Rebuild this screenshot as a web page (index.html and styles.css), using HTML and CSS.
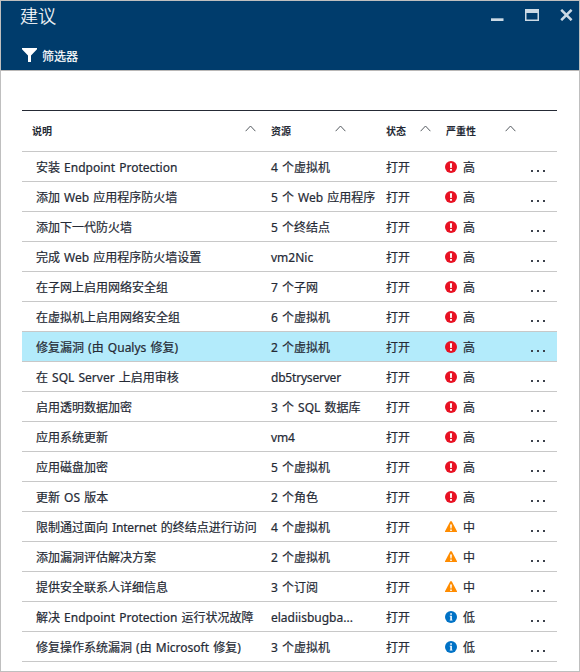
FILE: index.html
```
<!DOCTYPE html>
<html lang="zh-CN">
<head>
<meta charset="utf-8">
<title>建议</title>
<link rel="stylesheet" href="styles.css">
</head>
<body>
<svg class="defs" aria-hidden="true">
  <symbol id="high" viewBox="0 0 12 12"><circle cx="6" cy="6" r="6" fill="#e81123"/><path d="M4.9 2.2h2.2L6.8 7H5.2zM5 8h2v1.8H5z" fill="#fff"/></symbol>
  <symbol id="medium" viewBox="0 0 12 12"><path d="M5.3.2h1.4L12 10.2v.9H0v-.9z" fill="#ff8c00"/><path d="M5.1 3.6h1.8l-.3 4H5.4zM5.2 8.4h1.6V10H5.2z" fill="#fff"/></symbol>
  <symbol id="low" viewBox="0 0 12 12"><circle cx="6" cy="6" r="6" fill="#0072c6"/><path d="M5.2 2.2h1.7v1.6H5.2zM4.7 4.8h2.2v4h.6v.8H4.7v-.8h.6V5.6h-.6z" fill="#fff"/></symbol>
  <symbol id="sort" viewBox="0 0 11 7"><path d="M.6 6.2 5.5 1l4.9 5.2" fill="none" stroke="#555a60" stroke-width="1"/></symbol>
</svg>
<div class="blade">
  <header class="top">
    <div class="titlebar">
      <h1>建议</h1>
      <div class="controls">
        <svg width="13" height="12" viewBox="0 0 13 12"><path d="M0 9.3h12.5V12H0z"/></svg>
        <svg width="14" height="12" viewBox="0 0 14 12"><path fill-rule="evenodd" d="M0 0h14v12H0zM1.5 4h11v6.6h-11z"/></svg>
        <svg width="13" height="12" viewBox="0 0 13 12"><path d="m1.2.8 10.4 10.4m0-10.4L1.2 11.2" fill="none" stroke="#ccdae5" stroke-width="2.5"/></svg>
      </div>
    </div>
    <div class="filter">
      <svg width="15" height="14" viewBox="0 0 15 14"><path d="M0 0h15v1.3L9 7.4V14H6V7.4L0 1.3z" fill="#fff"/></svg>
      <span>筛选器</span>
    </div>
  </header>
  <main class="grid">
    <div class="row head">
      <span class="cell">说明<svg class="sort"><use href="#sort"/></svg></span>
      <span class="cell">资源<svg class="sort"><use href="#sort"/></svg></span>
      <span class="cell">状态<svg class="sort"><use href="#sort"/></svg></span>
      <span class="cell">严重性<svg class="sort"><use href="#sort"/></svg></span>
    </div>
    <div class="row"><span>安装 Endpoint Protection</span><span>4 个虚拟机</span><span>打开</span><span class="sev"><svg><use href="#high"/></svg>高</span><span class="more"><i></i><i></i><i></i></span></div>
    <div class="row"><span>添加 Web 应用程序防火墙</span><span>5 个 Web 应用程序</span><span>打开</span><span class="sev"><svg><use href="#high"/></svg>高</span><span class="more"><i></i><i></i><i></i></span></div>
    <div class="row"><span>添加下一代防火墙</span><span>5 个终结点</span><span>打开</span><span class="sev"><svg><use href="#high"/></svg>高</span><span class="more"><i></i><i></i><i></i></span></div>
    <div class="row"><span>完成 Web 应用程序防火墙设置</span><span>vm2Nic</span><span>打开</span><span class="sev"><svg><use href="#high"/></svg>高</span><span class="more"><i></i><i></i><i></i></span></div>
    <div class="row"><span>在子网上启用网络安全组</span><span>7 个子网</span><span>打开</span><span class="sev"><svg><use href="#high"/></svg>高</span><span class="more"><i></i><i></i><i></i></span></div>
    <div class="row"><span>在虚拟机上启用网络安全组</span><span>6 个虚拟机</span><span>打开</span><span class="sev"><svg><use href="#high"/></svg>高</span><span class="more"><i></i><i></i><i></i></span></div>
    <div class="row selected"><span>修复漏洞 (由 Qualys 修复)</span><span>2 个虚拟机</span><span>打开</span><span class="sev"><svg><use href="#high"/></svg>高</span><span class="more"><i></i><i></i><i></i></span></div>
    <div class="row"><span>在 SQL Server 上启用审核</span><span class="tight">db5tryserver</span><span>打开</span><span class="sev"><svg><use href="#high"/></svg>高</span><span class="more"><i></i><i></i><i></i></span></div>
    <div class="row"><span>启用透明数据加密</span><span>3 个 SQL 数据库</span><span>打开</span><span class="sev"><svg><use href="#high"/></svg>高</span><span class="more"><i></i><i></i><i></i></span></div>
    <div class="row"><span>应用系统更新</span><span class="tight">vm4</span><span>打开</span><span class="sev"><svg><use href="#high"/></svg>高</span><span class="more"><i></i><i></i><i></i></span></div>
    <div class="row"><span>应用磁盘加密</span><span>5 个虚拟机</span><span>打开</span><span class="sev"><svg><use href="#high"/></svg>高</span><span class="more"><i></i><i></i><i></i></span></div>
    <div class="row"><span>更新 OS 版本</span><span>2 个角色</span><span>打开</span><span class="sev"><svg><use href="#high"/></svg>高</span><span class="more"><i></i><i></i><i></i></span></div>
    <div class="row"><span>限制通过面向 <b class="tight">Internet</b> 的终结点进行访问</span><span>4 个虚拟机</span><span>打开</span><span class="sev"><svg><use href="#medium"/></svg>中</span><span class="more"><i></i><i></i><i></i></span></div>
    <div class="row"><span>添加漏洞评估解决方案</span><span>2 个虚拟机</span><span>打开</span><span class="sev"><svg><use href="#medium"/></svg>中</span><span class="more"><i></i><i></i><i></i></span></div>
    <div class="row"><span>提供安全联系人详细信息</span><span>3 个订阅</span><span>打开</span><span class="sev"><svg><use href="#medium"/></svg>中</span><span class="more"><i></i><i></i><i></i></span></div>
    <div class="row"><span>解决 Endpoint Protection 运行状况故障</span><span>eladiisbugba...</span><span>打开</span><span class="sev"><svg><use href="#low"/></svg>低</span><span class="more"><i></i><i></i><i></i></span></div>
    <div class="row"><span>修复操作系统漏洞 (由 Microsoft 修复)</span><span>3 个虚拟机</span><span>打开</span><span class="sev"><svg><use href="#low"/></svg>低</span><span class="more"><i></i><i></i><i></i></span></div>
  </main>
</div>
</body>
</html>
```
FILE: styles.css
```
* { box-sizing: border-box; }
body {
  margin: 0;
  font: 12px/31px "Noto Sans", "Noto Sans CJK SC", sans-serif;
  color: #252a35;
  background: #fff;
  word-spacing: 1px;
  -webkit-text-stroke: .2px;
}
.defs { display: none; }
svg { display: block; flex: none; }
.blade { height: 672px; border: 1px solid #bfbfbf; overflow: hidden; }
.top {
  height: 70px;
  background: #003c6c;
  border-bottom: 1px solid #bab8b7;
  color: #fff;
}
.titlebar { display: flex; justify-content: space-between; height: 43px; padding: 0 6px 0 19px; }
h1 { margin: 0; font-size: 18px; font-weight: 300; line-height: 30px; }
.controls { display: flex; gap: 21px; padding-top: 8px; fill: #ccdae5; }
.filter { display: flex; align-items: center; gap: 5px; height: 22px; padding-left: 21px; line-height: 22px; }
.filter span { padding-top: 3px; }
.grid { margin: 39px 22px 0 21px; border-top: 1px solid #252a35; }
.row {
  display: grid;
  grid-template-columns: 235px 115px 59px 84px 1fr;
  height: 30px;
  padding-left: 14px;
  border-bottom: 1px solid #c8c8c8;
  white-space: nowrap;
}
.tight { font-weight: 400; letter-spacing: -.2px; }
.head {
  grid-template-columns: 239px 115px 60px 1fr;
  height: 41px;
  padding-left: 10px;
  font-size: 10px;
  font-weight: 700;
  line-height: 41px;
  -webkit-text-stroke: 0;
}
.cell { display: flex; justify-content: space-between; padding-right: 15px; }
.cell:nth-child(2) { padding-right: 40px; }
.cell:nth-child(4) { padding-right: 41px; }
.sort { width: 11px; height: 7px; margin-top: 14px; }
.selected { background: #b3ebfb; }
.sev { display: flex; gap: 6px; }
.sev svg { width: 12px; height: 12px; margin-top: 9px; }
.more { display: flex; gap: 4px; padding: 18px 0 0 2px; }
.more i { width: 2px; height: 2px; background: #3c424c; }
```
